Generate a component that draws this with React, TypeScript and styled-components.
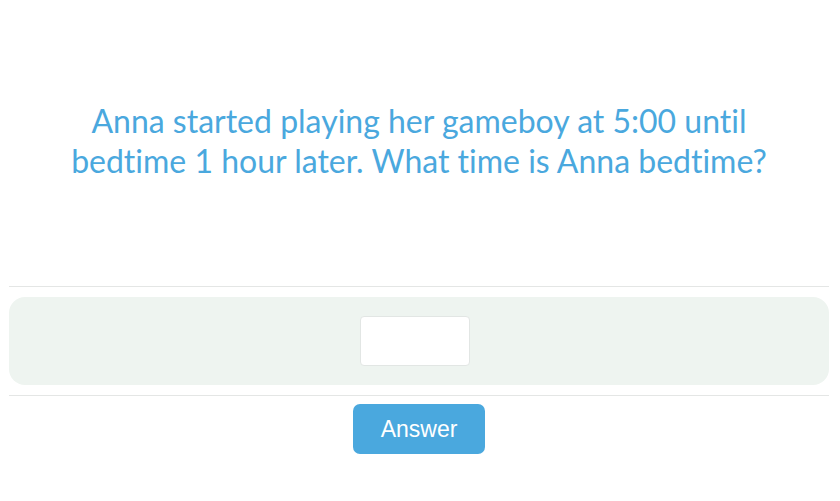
import React from "react";
import styled, { createGlobalStyle } from "styled-components";

const Global = createGlobalStyle`
  html, body { margin: 0; padding: 0; background: #ffffff; }
  body { font-family: "Liberation Sans", Arial, sans-serif; }
`;

const Page = styled.div`
  width: 840px;
  height: 501px;
  box-sizing: border-box;
  padding: 0 11px 0 9px;
  display: flex;
  flex-direction: column;
`;

const QuestionArea = styled.div`
  height: 286px;
  display: flex;
  align-items: center;
  justify-content: center;
  padding-bottom: 4px;
  box-sizing: border-box;
`;

const Question = styled.p`
  margin: 0;
  font-family: Lato, "Open Sans", sans-serif;
  font-size: 32px;
  line-height: 40px;
  color: #4aa8de;
  text-align: center;
  font-variant-ligatures: none;
`;

const Rule = styled.hr<{ $gap: number }>`
  margin: 0 0 ${(p) => p.$gap}px;
  border: none;
  border-top: 1px solid #e4e6e5;
  height: 0;
`;

const AnswerPanel = styled.div`
  height: 88px;
  margin-bottom: 10px;
  border-radius: 16px;
  background: #eef4f0;
  display: flex;
  align-items: center;
  justify-content: center;
`;

const AnswerInput = styled.input`
  width: 110px;
  height: 50px;
  box-sizing: border-box;
  border: 1px solid #e2e6e4;
  border-radius: 4px;
  background: #ffffff;
  margin-right: 9px;
  outline: none;
  font-size: 20px;
  text-align: center;
`;

const Actions = styled.div`
  display: flex;
  justify-content: center;
`;

const AnswerButton = styled.button`
  width: 132px;
  height: 50px;
  border: none;
  border-radius: 7px;
  background: #4aa8de;
  color: #ffffff;
  font-family: "Liberation Sans", Arial, sans-serif;
  font-size: 23px;
  cursor: pointer;
`;

export default function App() {
  return (
    <>
      <Global />
      <Page>
        <QuestionArea>
          <Question>
            Anna started playing her gameboy at 5:00 until
            <br />
            bedtime 1 hour later. What time is Anna bedtime?
          </Question>
        </QuestionArea>
        <Rule $gap={10} />
        <AnswerPanel>
          <AnswerInput type="text" aria-label="answer" />
        </AnswerPanel>
        <Rule $gap={8} />
        <Actions>
          <AnswerButton>Answer</AnswerButton>
        </Actions>
      </Page>
    </>
  );
}
